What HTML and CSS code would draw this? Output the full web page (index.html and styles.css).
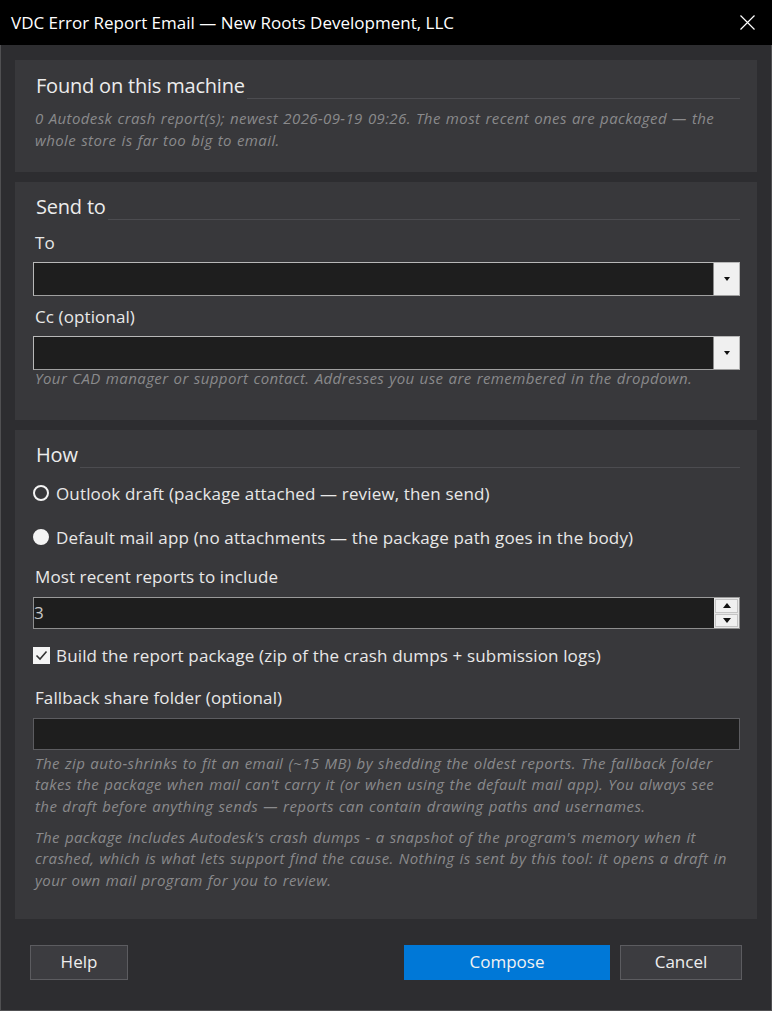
FILE: index.html
```html
<!DOCTYPE html>
<html lang="en">
<head>
<meta charset="utf-8">
<title>VDC Error Report Email</title>
<link rel="stylesheet" href="styles.css">
</head>
<body>
<div class="window">
  <header class="titlebar">
    <span class="title">VDC Error Report Email — New Roots Development, LLC</span>
    <span class="close" aria-label="Close">
      <svg width="15" height="15" viewBox="0 0 15 15"><path d="M0.5 0.5 L14.5 14.5 M14.5 0.5 L0.5 14.5" stroke="#fff" stroke-width="1.2" fill="none"/></svg>
    </span>
  </header>
  <main class="content">
    <section class="group g1">
      <div class="group-head"><span class="group-title">Found on this machine</span><span class="rule"></span></div>
      <p class="note n1">0 Autodesk crash report(s); newest 2026-09-19 09:26. The most recent ones are packaged — the whole store is far too big to email.</p>
    </section>
    <section class="group g2">
      <div class="group-head"><span class="group-title">Send to</span><span class="rule"></span></div>
      <label class="label l-to">To</label>
      <div class="combo"><span class="combo-field"></span><span class="combo-btn"><i class="tri-down"></i></span></div>
      <label class="label l-cc">Cc (optional)</label>
      <div class="combo"><span class="combo-field"></span><span class="combo-btn"><i class="tri-down"></i></span></div>
      <p class="note n2">Your CAD manager or support contact. Addresses you use are remembered in the dropdown.</p>
    </section>
    <section class="group g3">
      <div class="group-head"><span class="group-title">How</span><span class="rule"></span></div>
      <div class="option r1"><span class="radio"></span><span class="opt-text">Outlook draft (package attached — review, then send)</span></div>
      <div class="option r2"><span class="radio checked"></span><span class="opt-text">Default mail app (no attachments — the package path goes in the body)</span></div>
      <label class="label l-recent">Most recent reports to include</label>
      <div class="spin"><span class="spin-field">3</span><span class="spin-btns"><span class="spin-btn"><i class="tri-up"></i></span><span class="spin-btn"><i class="tri-down"></i></span></span></div>
      <div class="option c1"><span class="check"><svg width="15" height="15" viewBox="0 0 15 15"><path d="M2.5 7.5 L6 11 L12.5 3.5" stroke="#333" stroke-width="1.6" fill="none"/></svg></span><span class="opt-text">Build the report package (zip of the crash dumps + submission logs)</span></div>
      <label class="label l-fallback">Fallback share folder (optional)</label>
      <div class="textbox"></div>
      <p class="note n3">The zip auto-shrinks to fit an email (~15 MB) by shedding the oldest reports. The fallback folder takes the package when mail can't carry it (or when using the default mail app). You always see the draft before anything sends — reports can contain drawing paths and usernames.</p>
      <p class="note n4">The package includes Autodesk's crash dumps - a snapshot of the program's memory when it crashed, which is what lets support find the cause. Nothing is sent by this tool: it opens a draft in your own mail program for you to review.</p>
    </section>
  </main>
  <footer class="actions">
    <button class="btn btn-help">Help</button>
    <span class="spacer"></span>
    <button class="btn btn-primary">Compose</button>
    <button class="btn btn-cancel">Cancel</button>
  </footer>
</div>
</body>
</html>
```
FILE: styles.css
```css
* { box-sizing: border-box; }
html, body { margin: 0; padding: 0; }
body {
  background: #2d2d30;
  font-family: "Open Sans", "Noto Sans", sans-serif;
  color: #e8e8e8;
}
.window {
  width: 772px;
  height: 1011px;
  display: flex;
  flex-direction: column;
  border-left: 1px solid #505052;
  border-right: 1px solid #505052;
  border-bottom: 1px solid #505052;
}
.titlebar {
  height: 45px;
  flex: none;
  background: #000;
  display: flex;
  align-items: center;
  padding-left: 11px;
  padding-right: 17px;
  margin: 0 -1px;
}
.title {
  flex: 1;
  color: #fff;
  font-size: 17px;
  letter-spacing: 0;
  padding-bottom: 1px;
}
.close { display: flex; width: 15px; height: 15px; }

.content {
  padding: 15px 14px 0 14px;
  display: flex;
  flex-direction: column;
  gap: 10px;
}
.group {
  background: #38383b;
  padding: 11px 17px 0 18px;
  display: flex;
  flex-direction: column;
}
.g1 { height: 112px; padding-top: 12px; }
.g2 { height: 238px; }
.g3 { height: 489px; }

.group-head {
  display: flex;
  align-items: stretch;
  height: 28px;
}
.group-title {
  font-size: 20px;
  line-height: 28px;
  padding-left: 3px;
  letter-spacing: -0.2px;
  color: #ececec;
  white-space: nowrap;
}
.rule {
  flex: 1;
  border-bottom: 1px solid #4c4c50;
  margin-bottom: 1px;
  margin-left: 2px;
}

.note {
  margin: 0;
  width: 696px;
  font-size: 15px;
  line-height: 21.5px;
  font-style: italic;
  color: #8a8a8c;
  padding-left: 2px;
  letter-spacing: 0.4px;
  word-spacing: 0.8px;
}
.n1 { margin-top: 8px; }
.n2 { margin-top: -2px; }
.n3 { margin-top: 3px; }
.n4 { margin-top: 9.5px; }

.label {
  display: block;
  font-size: 17px;
  line-height: 22px;
  padding-left: 2px;
  letter-spacing: 0.1px;
  color: #e8e8e8;
}
.l-to { margin-top: 11px; }
.l-cc { margin-top: 10px; }
.l-recent { margin-top: 18px; }
.l-fallback { margin-top: 20px; }

.combo {
  margin-top: 8px;
  height: 34px;
  display: flex;
  border: 1px solid #b8b8b8;
  border-bottom-color: #a0a0a0;
  background: #f0f0f0;
}
.combo-field {
  flex: 1;
  background: #1e1e1e;
  border-right: 1px solid #8c8c8c;
}
.combo-btn {
  width: 25px;
  display: flex;
  align-items: center;
  justify-content: center;
  background: #f0f0f0;
}
.tri-down, .tri-up {
  display: block;
  width: 0;
  height: 0;
  border-left: 3.5px solid transparent;
  border-right: 3.5px solid transparent;
}
.tri-down { border-top: 4px solid #111; }
.tri-up { border-bottom: 4px solid #111; }
.spin-btn .tri-down, .spin-btn .tri-up {
  border-left-width: 4.5px;
  border-right-width: 4.5px;
}
.spin-btn .tri-down { border-top-width: 5px; }
.spin-btn .tri-up { border-bottom-width: 5px; }

.option {
  display: flex;
  align-items: center;
  height: 22px;
  font-size: 17px;
  letter-spacing: 0.15px;
  color: #e8e8e8;
}
.r1 { margin-top: 13px; }
.r2 { margin-top: 22px; }
.radio {
  width: 16px;
  height: 16px;
  border-radius: 50%;
  border: 2px solid #f4f4f4;
  margin-right: 7px;
  flex: none;
}
.radio.checked { background: #f4f4f4; }
.opt-text { white-space: nowrap; }

.spin {
  margin-top: 9px;
  height: 32px;
  display: flex;
  border: 1px solid #8e8e8e;
  border-top-color: #9a9a9a;
}
.spin-field {
  flex: 1;
  background: #1e1e1e;
  font-size: 17px;
  line-height: 30px;
  color: #c8c8c8;
  padding-left: 0;
}
.spin-btns {
  width: 25px;
  display: flex;
  flex-direction: column;
  background: #e6e6e6;
  padding: 1px;
  gap: 1px;
}
.spin-btn {
  flex: 1;
  display: flex;
  align-items: center;
  justify-content: center;
  background: #f0f0f0;
  border: 1px solid #c4c4c4;
}

.c1 { margin-top: 15.5px; }
.check {
  width: 17px;
  height: 17px;
  background: #f4f4f4;
  margin-right: 6px;
  display: flex;
  align-items: center;
  justify-content: center;
  flex: none;
}

.textbox {
  margin-top: 9px;
  height: 32px;
  background: #1e1e1e;
  border: 1px solid #5c5c60;
}

.actions {
  display: flex;
  align-items: center;
  padding: 26px 29px 0 29px;
  gap: 10px;
}
.spacer { flex: 1; }
.btn {
  height: 35px;
  font-family: "Open Sans", "Noto Sans", sans-serif;
  font-size: 17px;
  letter-spacing: 0;
  color: #eeeeee;
  background: #3c3c40;
  border: 1px solid #5c5c60;
  padding: 0 0 2px 0;
}
.btn-help { width: 98px; }
.btn-primary { width: 206px; background: #0078d7; border-color: #0078d7; color: #f2f2f2; }
.btn-cancel { width: 122px; }
```
